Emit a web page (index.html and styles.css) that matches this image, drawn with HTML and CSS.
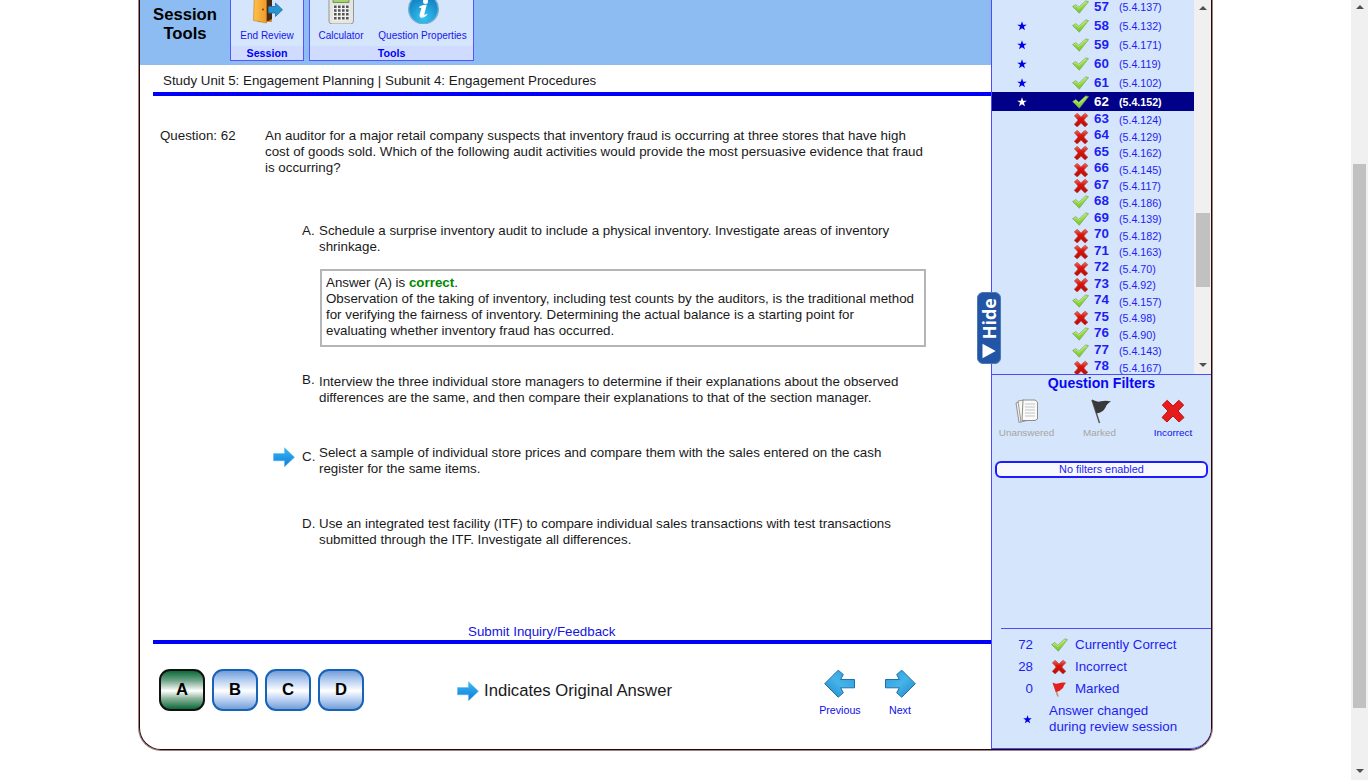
FILE: index.html
```html
<!DOCTYPE html>
<html lang="en">
<head>
<meta charset="utf-8">
<title>Study Session</title>
<link rel="stylesheet" href="styles.css">
</head>
<body>
<svg class="defs" width="0" height="0">
  <defs>
    <linearGradient id="gGreen" x1="0" y1="0" x2="0" y2="1"><stop offset="0" stop-color="#a9e656"/><stop offset="1" stop-color="#76c92a"/></linearGradient>
    <linearGradient id="gRed" x1="0" y1="0" x2="0" y2="1"><stop offset="0" stop-color="#f26a5e"/><stop offset=".4" stop-color="#d8140c"/><stop offset="1" stop-color="#b80e0a"/></linearGradient>
    <linearGradient id="gArrow" x1="0" y1="0" x2="0" y2="1"><stop offset="0" stop-color="#35bdf5"/><stop offset="1" stop-color="#1377d8"/></linearGradient>
    <linearGradient id="gNav" x1="0" y1="0" x2="1" y2="1"><stop offset="0" stop-color="#2f9bd8"/><stop offset=".5" stop-color="#45b4e8"/><stop offset="1" stop-color="#1f86c8"/></linearGradient>
    <linearGradient id="gDoor" x1="0" y1="0" x2="1" y2="0"><stop offset="0" stop-color="#ffc04a"/><stop offset="1" stop-color="#ee9a28"/></linearGradient>
    <radialGradient id="gInfo" cx=".5" cy=".8" r=".8"><stop offset="0" stop-color="#35c4f2"/><stop offset="1" stop-color="#0d78bd"/></radialGradient>
    <symbol id="check" viewBox="0 0 17 14"><path d="M.6 6.6 3.800 4.600 6.800 7.300 13.700 .9 16.500 1.600 7.300 13.200Z" fill="url(#gGreen)" stroke="#7da05e" stroke-width=".7" stroke-linejoin="round"/><path d="M2.200 6.500 3.800 5.600 6.800 8.300 14 1.800" fill="none" stroke="#d4f2a8" stroke-width=".7"/></symbol>
    <symbol id="cross" viewBox="0 0 16 16"><path d="M1.300 4 4 1.300Q6 2.500 8 5.100 10 2.400 12.400 1.200L14.900 3.800Q12.600 5.500 10.900 8 12.500 10.500 14.900 12.300L12.100 14.900Q9.700 13.300 8 11 6.300 13.500 4 14.900L1.200 12.300Q3.500 10.500 5 8 3.500 5.700 1.300 4Z" fill="url(#gRed)" stroke="#b5524d" stroke-width=".7"/></symbol>
    <symbol id="star" viewBox="0 0 10 10"><path d="M5 .3 6.200 3.700H9.800L6.900 5.800 8 9.300 5 7.200 2 9.300 3.100 5.800.2 3.700H3.800Z" fill="currentColor"/></symbol>
    <symbol id="arrow" viewBox="0 0 22 20"><path d="M.5 6.500H11.500V.7L21.500 10.200 11.500 19.700V13.800H.5Z" fill="url(#gArrow)" stroke="#58b7ee" stroke-width=".5"/></symbol>
    <symbol id="next" viewBox="0 0 32 30"><path d="M1.500 10.500H15.300L12.700 5.500 17.800 1.200 31.300 14.700 17.800 28.200 12.700 23.800 15.300 18.800H1.500Z" fill="url(#gNav)" stroke="#1d70ae" stroke-width="1" stroke-linejoin="round"/></symbol>
  </defs>
</svg>
<div class="page">
  <div class="frame">
    <main class="main">
      <header class="header">
        <div class="header-title">Session<br>Tools</div>
        <section class="group group-session">
          <div class="group-items">
            <div class="tool">
              <svg width="32" height="34" viewBox="0 0 32 34"><path d="M7 0H21V31.500H7Z" fill="#462a18"/><path d="M3.500 0H13L15.500 3V33L2.500 30.500Z" fill="url(#gDoor)" stroke="#c07a20" stroke-width=".6"/><circle cx="12" cy="19.500" r="1" fill="#754410"/><path d="M17.500 16.500H24.500V13L31.500 19.800 24.500 26.500V23H17.500Z" fill="#2994cf" stroke="#1d6ea8" stroke-width=".8"/><path d="M15.500 32 21 29V32Z" fill="#de8c22"/></svg>
              <span>End Review</span>
            </div>
          </div>
          <h2>Session</h2>
        </section>
        <section class="group group-tools">
          <div class="group-items">
            <div class="tool tool-calc">
              <svg width="28" height="34" viewBox="0 0 28 34"><path d="M2 0H26.500V31Q26.500 34 23.500 34H5Q2 34 2 31Z" fill="#e5e5e2" stroke="#979793"/><path d="M6 6H22V12.500H6Z" fill="#a5d46e" stroke="#596e46" stroke-width=".7"/><path d="M6 15H22.500V30.500H6Z" fill="#f2f2f2"/><path d="M8.300 15.500V30M12.300 15.500V30M16.300 15.500V30M20.300 15.500V30" stroke="#555" stroke-width="2.600" stroke-dasharray="2.500 1.300"/></svg>
              <span>Calculator</span>
            </div>
            <div class="tool tool-props">
              <svg width="34" height="34" viewBox="0 0 34 34"><circle cx="17.500" cy="19" r="14.800" fill="url(#gInfo)" stroke="#6faed6" stroke-width="1.500"/><circle cx="19.500" cy="11.500" r="2.500" fill="#fff"/><path d="M13.500 16.500Q17 14.300 20.800 14.800L18.300 24Q18.100 25.700 21.500 23.500L21 25Q17.500 28.700 14.500 27.500 13 26.700 13.600 24.500L15.500 17.700 13.300 18Z" fill="#fff"/></svg>
              <span>Question Properties</span>
            </div>
          </div>
          <h2>Tools</h2>
        </section>
      </header>
      <div class="crumb">Study Unit 5: Engagement Planning | Subunit 4: Engagement Procedures</div>
      <section class="question">
        <div class="q-label">Question: 62</div>
        <div class="q-text">An auditor for a major retail company suspects that inventory fraud is occurring at three stores that have high<br>cost of goods sold. Which of the following audit activities would provide the most persuasive evidence that fraud<br>is occurring?</div>
      </section>
      <section class="choices">
        <div class="choice choice-a">
          <span class="mark"></span><span class="letter">A.</span>
          <p>Schedule a surprise inventory audit to include a physical inventory. Investigate areas of inventory<br>shrinkage.</p>
        </div>
        <div class="explain">Answer (A) is <b>correct</b>.<br>Observation of the taking of inventory, including test counts by the auditors, is the traditional method<br>for verifying the fairness of inventory. Determining the actual balance is a starting point for<br>evaluating whether inventory fraud has occurred.</div>
        <div class="choice choice-b">
          <span class="mark"></span><span class="letter">B.</span>
          <p>Interview the three individual store managers to determine if their explanations about the observed<br>differences are the same, and then compare their explanations to that of the section manager.</p>
        </div>
        <div class="choice choice-c">
          <span class="mark"><svg width="22" height="20"><use href="#arrow"/></svg></span><span class="letter">C.</span>
          <p>Select a sample of individual store prices and compare them with the sales entered on the cash<br>register for the same items.</p>
        </div>
        <div class="choice choice-d">
          <span class="mark"></span><span class="letter">D.</span>
          <p>Use an integrated test facility (ITF) to compare individual sales transactions with test transactions<br>submitted through the ITF. Investigate all differences.</p>
        </div>
      </section>
      <div class="feedback"><a>Submit Inquiry/Feedback</a></div>
      <footer class="footer">
        <div class="answers">
          <button class="answer answer-on">A</button><button class="answer">B</button><button class="answer">C</button><button class="answer">D</button>
        </div>
        <div class="legend"><svg width="22" height="20"><use href="#arrow"/></svg>Indicates Original Answer</div>
        <nav class="nav">
          <a><svg class="flip" width="32" height="30"><use href="#next"/></svg>Previous</a>
          <a><svg width="32" height="30"><use href="#next"/></svg>Next</a>
        </nav>
      </footer>
    </main>
    <aside class="side">
      <div class="hide-tab"><svg width="14" height="16" viewBox="0 0 14 16"><path d="M.5 .8V15.200L13.700 8Z" fill="#fff"/></svg><span>Hide</span></div>
      <div class="list">
        <div class="rows">
          <div class="row tall"><i></i><svg class="ok"><use href="#check"/></svg><b>57</b><span>(5.4.137)</span></div>
          <div class="row tall"><i><svg><use href="#star"/></svg></i><svg class="ok"><use href="#check"/></svg><b>58</b><span>(5.4.132)</span></div>
          <div class="row tall"><i><svg><use href="#star"/></svg></i><svg class="ok"><use href="#check"/></svg><b>59</b><span>(5.4.171)</span></div>
          <div class="row tall"><i><svg><use href="#star"/></svg></i><svg class="ok"><use href="#check"/></svg><b>60</b><span>(5.4.119)</span></div>
          <div class="row tall"><i><svg><use href="#star"/></svg></i><svg class="ok"><use href="#check"/></svg><b>61</b><span>(5.4.102)</span></div>
          <div class="row tall current"><i><svg><use href="#star"/></svg></i><svg class="ok"><use href="#check"/></svg><b>62</b><span>(5.4.152)</span></div>
          <div class="row"><i></i><svg class="bad"><use href="#cross"/></svg><b>63</b><span>(5.4.124)</span></div>
          <div class="row"><i></i><svg class="bad"><use href="#cross"/></svg><b>64</b><span>(5.4.129)</span></div>
          <div class="row"><i></i><svg class="bad"><use href="#cross"/></svg><b>65</b><span>(5.4.162)</span></div>
          <div class="row"><i></i><svg class="bad"><use href="#cross"/></svg><b>66</b><span>(5.4.145)</span></div>
          <div class="row"><i></i><svg class="bad"><use href="#cross"/></svg><b>67</b><span>(5.4.117)</span></div>
          <div class="row"><i></i><svg class="ok"><use href="#check"/></svg><b>68</b><span>(5.4.186)</span></div>
          <div class="row"><i></i><svg class="ok"><use href="#check"/></svg><b>69</b><span>(5.4.139)</span></div>
          <div class="row"><i></i><svg class="bad"><use href="#cross"/></svg><b>70</b><span>(5.4.182)</span></div>
          <div class="row"><i></i><svg class="bad"><use href="#cross"/></svg><b>71</b><span>(5.4.163)</span></div>
          <div class="row"><i></i><svg class="bad"><use href="#cross"/></svg><b>72</b><span>(5.4.70)</span></div>
          <div class="row"><i></i><svg class="bad"><use href="#cross"/></svg><b>73</b><span>(5.4.92)</span></div>
          <div class="row"><i></i><svg class="ok"><use href="#check"/></svg><b>74</b><span>(5.4.157)</span></div>
          <div class="row"><i></i><svg class="bad"><use href="#cross"/></svg><b>75</b><span>(5.4.98)</span></div>
          <div class="row"><i></i><svg class="ok"><use href="#check"/></svg><b>76</b><span>(5.4.90)</span></div>
          <div class="row"><i></i><svg class="ok"><use href="#check"/></svg><b>77</b><span>(5.4.143)</span></div>
          <div class="row"><i></i><svg class="bad"><use href="#cross"/></svg><b>78</b><span>(5.4.167)</span></div>
        </div>
        <div class="list-bar">
          <svg class="cap" width="8" height="4"><path d="M0 4 4 0 8 4Z" fill="#505050"/></svg>
          <div class="list-thumb"></div>
          <svg class="cap" width="8" height="4"><path d="M0 0 4 4 8 0Z" fill="#505050"/></svg>
        </div>
      </div>
      <section class="filters">
        <h3>Question Filters</h3>
        <div class="filter-row">
          <div class="filter off"><svg width="24" height="26" viewBox="0 0 24 26"><path d="M1 5 8 2.500 11 22 4 24.500Z" fill="#f2f2f0" stroke="#92928d"/><path d="M3 3 9 2 14 22 6 24Z" fill="#f8f8f7" stroke="#9a9a96"/><path d="M8 2H20L22.500 4V21L20 22.500H7Z" fill="#fafafa" stroke="#8c8c88"/><path d="M10 6H20M10 9H20M10 12H20M10 15H20M10 18H20" stroke="#c5c5c2"/></svg>Unanswered</div>
          <div class="filter off"><svg width="24" height="26" viewBox="0 0 24 26"><path d="M4 2 11.500 25" stroke="#55534e" stroke-width="1.400"/><path d="M4 1.500Q9 4.500 13 3.300T23 3.200Q18.500 6 17.500 9.500 15 14.500 8.500 15.500Z" fill="#38383a"/></svg>Marked</div>
          <div class="filter"><svg width="24" height="26" viewBox="0 0 24 26"><path d="M1.300 7 6.200 2.300 12 8 17.800 2.300 22.700 7 17 13 23 19.500 18 24 12 18 6 24 1 19.500 7 13Z" fill="#e51c1c" stroke="#bd1515" stroke-linejoin="round"/></svg>Incorrect</div>
        </div>
        <div class="filter-state">No filters enabled</div>
      </section>
      <section class="stats">
        <div class="stat"><em>72</em><svg width="17" height="14"><use href="#check"/></svg><span>Currently Correct</span></div>
        <div class="stat"><em>28</em><svg width="16" height="16"><use href="#cross"/></svg><span>Incorrect</span></div>
        <div class="stat"><em>0</em><svg width="16" height="16" viewBox="0 0 16 16"><path d="M2.500 2 7 15.500" stroke="#b99463" stroke-width="1.500"/><path d="M1.500 1.500Q5 3.500 8 2.300T15 1.800Q12.300 4.500 12 7 9 10.500 4.800 11Z" fill="#e41f1f"/></svg><span>Marked</span></div>
        <div class="stat-star"><svg width="9" height="9"><use href="#star"/></svg><span>Answer changed<br>during review session</span></div>
      </section>
    </aside>
  </div>
</div>
<div class="page-bar">
  <svg class="cap" width="8" height="4"><path d="M0 4 4 0 8 4Z" fill="#505050"/></svg>
  <div class="page-thumb"></div>
  <svg class="cap" width="8" height="4"><path d="M0 0 4 4 8 0Z" fill="#505050"/></svg>
</div>
</body>
</html>
```

FILE: styles.css
```css
* { box-sizing: border-box; }
body { margin: 0; height: 780px; overflow: hidden; display: flex; background: #fff; font: 13.33px/16px "Liberation Sans", Arial, sans-serif; color: #1a1a1a; white-space: nowrap; }
h2, h3, p { margin: 0; }
svg { display: block; flex: none; }
.defs { position: absolute; }
.page { width: 1351px; padding-left: 139px; }
.frame { display: flex; width: 1073px; height: 750px; border: 1px solid #2a0505; border-top: 0; border-radius: 0 0 22px 22px; box-shadow: 0 0 0 1px #9b8585; }
.main { width: 851px; }

.header { display: flex; height: 65px; background: #8cbcf1; }
.header-title { width: 90px; padding-top: 5px; text-align: center; font-size: 16.67px; font-weight: bold; line-height: 19px; color: #000; }
.group { height: 61px; border: 1px solid #5656ff; border-top: 0; background: #d5e5fb; display: flex; flex-direction: column; }
.group-session { width: 74px; }
.group-tools { width: 165px; margin-left: 5px; }
.group h2 { height: 14px; margin-top: auto; background: #d0dcff; font-size: 10.67px; line-height: 14px; text-align: center; color: #0000f5; }
.group-items { display: flex; height: 46px; margin-top: -10px; flex: 1; }
.tool { flex: 1; display: flex; flex-direction: column; align-items: center; color: #1616ee; font-size: 10px; line-height: 12px; }
.tool svg { margin-bottom: 6px; }
.tool-calc { flex: 0 0 62px; }

.crumb { height: 31px; margin-left: 13px; padding: 8px 0 0 10px; border-bottom: 4px solid #0000f8; }
.question { display: flex; margin-top: 32px; padding-left: 20px; }
.q-label { width: 105px; }
.choices { padding: 47px 0 0 130px; }
.choice { display: flex; height: 32px; }
.mark { width: 32px; padding: 2px 0 0 3px; }
.letter { width: 17px; }
.choice-b { margin-top: 27px; }
.choice-b .letter { margin-top: -2px; }
.choice-c, .choice-d { margin-top: 39px; }
.choice-c .letter { margin-top: 4px; }
.explain { width: 606px; height: 78px; margin: 14px 0 0 50px; padding: 4px 0 0 4px; border: 2px solid #b5b5b5; box-shadow: none; }
.explain b { color: #008a00; }
.feedback { margin: 76px 0 0 13px; height: 20px; padding-left: 315px; border-bottom: 4px solid #0000f8; color: #1414dc; }
.footer { display: flex; height: 105px; padding: 25px 0 0 19px; }
.answers { display: flex; gap: 7px; }
.answer { width: 46px; height: 42px; padding: 0; border: 2px solid #1663b8; border-radius: 11px; background: linear-gradient(#739ed8, #a9c5ee 20%, #fff 52%, #c3d6f5 72%, #759fd8); font: bold 16.67px/38px "Liberation Sans", Arial, sans-serif; color: #000; }
.answer-on { border-color: #111; background: linear-gradient(#0a6a38, #6fa387 25%, #fff 52%, #8cb49b 72%, #0a6a38); }
.legend { display: flex; align-items: center; gap: 5px; height: 43px; margin-left: 93px; font-size: 16.67px; }
.nav { display: flex; margin-left: 138px; }
.nav a { width: 60px; display: flex; flex-direction: column; align-items: center; gap: 3px; color: #0e0ee8; font-size: 10.67px; }
.flip { transform: scaleX(-1); }

.side { position: relative; width: 220px; height: 749px; display: flex; flex-direction: column; background: #d5e5fb; border: 1px solid #4b4bff; border-top: 0; border-right: 0; border-radius: 0 0 21px 0; color: #1e1ef2; }
.list { display: flex; height: 375px; border-bottom: 1px solid #4b4bff; overflow: hidden; }
.rows { width: 202px; margin-top: -3px; }
.row { display: grid; grid-template-columns: 80px 22px 25px 1fr; align-items: center; height: 16.53px; }
.row.tall { height: 19px; }
.row i { padding-left: 25px; }
.row i svg { width: 10px; height: 10px; color: #0000e8; }
.row .ok { width: 17px; height: 14px; }
.row .bad { width: 16px; height: 16px; margin: 1px 0 0 1px; }
.row b { font-size: 13.33px; }
.row span { font-size: 10.67px; padding-top: 1px; }
.row:not(.tall) b { margin-top: -2px; }
.row.current { background: #000088; color: #fff; font-weight: bold; }
.row.current i svg { color: #fff; }
.list-bar { display: flex; flex-direction: column; justify-content: space-between; align-items: center; width: 17px; padding: 6px 0 7px; background: #f0f0f0; }
.list-thumb { width: 14px; height: 74px; margin-top: 126px; background: #c1c1c1; }
.hide-tab { position: absolute; left: -15px; top: 292px; width: 24px; height: 72px; border: 1px solid #4d7ab5; border-radius: 6px; background: #2255a5; color: #fff; font: bold 18px/22px "Open Sans", sans-serif; display: flex; flex-direction: column-reverse; align-items: center; padding: 4px 0; gap: 4px; }
.hide-tab span { writing-mode: vertical-rl; transform: rotate(180deg); }

.filters h3 { font-size: 14.1px; line-height: 16px; text-align: center; color: #0808f2; }
.filter-row { display: flex; padding-top: 7px; }
.filter { width: 73px; display: flex; flex-direction: column; align-items: center; gap: 3px; font-size: 9.9px; line-height: 11px; color: #0c0cf0; }
.filter-row .filter:first-child { width: 69px; }
.filter-row .filter:nth-child(2) { width: 77px; }
.filter-row .filter:nth-child(3) { width: 70px; }
.filter.off { color: #a5a5a0; }
.filter-state { width: 213px; height: 17px; margin: 23px 0 0 3px; border: 2px solid #1c1cff; border-radius: 6px; background: #f8f8ff; font-size: 10.9px; line-height: 13px; text-align: center; }
.stats { margin: auto 0 0 9px; height: 120px; border-top: 1px solid #4b4bff; padding-top: 5px; }
.stat { display: flex; align-items: center; height: 22px; }
.stat em { width: 32px; font-style: normal; text-align: right; }
.stat svg { margin-left: 18px; }
.stat span { margin-left: auto; width: 136px; }
.stat-star { display: flex; align-items: center; margin-top: 3px; padding-left: 22px; gap: 17px; }
.stat-star svg { color: #0000e8; }

.page-bar { width: 17px; display: flex; flex-direction: column; justify-content: space-between; align-items: center; padding: 5px 0 7px; background: #f0f0f0; }
.page-thumb { width: 13px; height: 544px; margin-top: 93px; background: #c1c1c1; }
```
